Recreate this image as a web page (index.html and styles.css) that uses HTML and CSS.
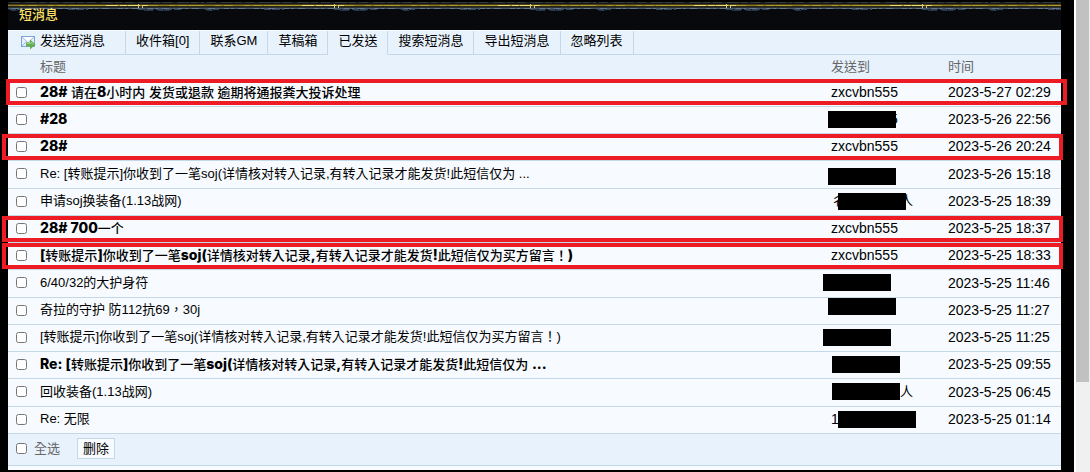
FILE: index.html
```
<!DOCTYPE html>
<html lang="zh-TW">
<head>
  <meta charset="UTF-8" />
  <meta name="viewport" content="width=device-width, initial-scale=1.0"/>
  <title>短消息</title>
  <link rel="stylesheet" href="styles.css">
</head>
<body>
  <main class="page">
    <div class="banner">
      <svg class="trim" width="100%" height="12" aria-hidden="true">
        <defs>
          <pattern id="trim" width="196" height="12" patternUnits="userSpaceOnUse">
            <rect width="196" height="12" fill="#08090c"/>
            <path d="M0 .5h196M0 1.500h196" stroke="#000"/>
            <path d="M0 2.500h196" stroke="#34393f"/>
            <path d="M0 2.500h196" stroke="#1d2024" stroke-dasharray="3 9 5 12 2 7"/>
            <path d="M0 3.500h196" stroke="#15161a"/>
            <path d="M0 4.500h196" stroke="#4a4216"/>
            <path d="M0 5.500h196" stroke="#b09a30"/>
            <path d="M0 5.500h60M150 5.500h30" stroke="#8a7a28" stroke-dasharray="11 6 3 9"/>
            <path d="M98 5.500h42" stroke="#e8dc80" stroke-dasharray="12 2 7 1"/>
            <path d="M0 6.500h196" stroke="#2c2810"/>
            <path d="M0 7.500h196" stroke="#2a3038"/>
            <path d="M0 8.500h196" stroke="#66788c"/>
            <path d="M0 8.500h196" stroke="#4a596b" stroke-dasharray="4 7 9 5 2 3"/>
            <path d="M130 9.500h44M1 9.500h14M60 9.500h20" stroke="#34465c" stroke-dasharray="7 1 8 2"/>
            <path d="M136 10.500h9M150 10.500h12M3 10.500h6" stroke="#26344a"/>
            <path d="M130.500 4v4M134.500 5v3" stroke="#d8cc80"/>
          </pattern>
        </defs>
        <rect width="100%" height="12" fill="url(#trim)"/>
      </svg>
      <h1>短消息</h1>
    </div>

    <form class="panel">
      <nav class="tabs">
        <a class="compose" href="#">
          <svg width="15" height="14" viewBox="0 0 15 14" aria-hidden="true">
            <rect x="0.500" y="0.500" width="13" height="10" fill="#e3eefa" stroke="#7ba4d8"/>
            <path d="M1 1h12L7 6.500z" fill="#fff"/>
            <path d="M1 1l6 5.500L13 1M1 10l4.500-4.500" fill="none" stroke="#9dbce3"/>
            <path d="M5 6.500h4v-3l5.500 5-5.500 5v-3h-4z" fill="#63ad4c"/>
            <path d="M6 7.500h4V6l2.500 2.500" fill="none" stroke="#97cf7e"/>
          </svg>
          发送短消息
        </a>
        <a href="#">收件箱[0]</a>
        <a href="#">联系GM</a>
        <a href="#">草稿箱</a>
        <a class="current" href="#">已发送</a>
        <a href="#">搜索短消息</a>
        <a href="#">导出短消息</a>
        <a href="#">忽略列表</a>
        <span class="fill"></span>
      </nav>

      <table class="messages">
        <thead>
          <tr>
            <th class="check"></th>
            <th>标题</th>
            <th class="user">发送到</th>
            <th class="time">时间</th>
          </tr>
        </thead>
        <tbody>
          <tr class="unread">
            <td class="check"><input type="checkbox" aria-label="选择"><span class="mark first"></span></td>
            <td><a href="#"><b>28#</b> 请在<b>8</b>小时内 发货或退款 逾期将通报粪大投诉处理</a></td>
            <td class="user">zxcvbn555</td>
            <td class="time">2023-5-27 02:29</td>
          </tr>
          <tr class="unread">
            <td class="check"><input type="checkbox" aria-label="选择"></td>
            <td><a href="#"><b>#28</b></a></td>
            <td class="user"><span class="tail near">5</span><span class="redact"></span></td>
            <td class="time">2023-5-26 22:56</td>
          </tr>
          <tr class="unread">
            <td class="check"><input type="checkbox" aria-label="选择"><span class="mark"></span></td>
            <td><a href="#"><b>28#</b></a></td>
            <td class="user">zxcvbn555</td>
            <td class="time">2023-5-26 20:24</td>
          </tr>
          <tr>
            <td class="check"><input type="checkbox" aria-label="选择"></td>
            <td><a href="#">Re: [转账提示]你收到了一笔soj(详情核对转入记录,有转入记录才能发货!此短信仅为 ...</a></td>
            <td class="user"><span class="redact low"></span></td>
            <td class="time">2023-5-26 15:18</td>
          </tr>
          <tr>
            <td class="check"><input type="checkbox" aria-label="选择"></td>
            <td><a href="#">申请soj换装备(1.13战网)</a></td>
            <td class="user cjk">彳<span class="tail">人</span><span class="redact right"></span></td>
            <td class="time">2023-5-25 18:39</td>
          </tr>
          <tr class="unread">
            <td class="check"><input type="checkbox" aria-label="选择"><span class="mark"></span></td>
            <td><a href="#"><b>28# 700</b>一个</a></td>
            <td class="user">zxcvbn555</td>
            <td class="time">2023-5-25 18:37</td>
          </tr>
          <tr class="unread">
            <td class="check"><input type="checkbox" aria-label="选择"><span class="mark"></span></td>
            <td><a href="#"><b>[</b>转账提示<b>]</b>你收到了一笔<b>soj(</b>详情核对转入记录<b>,</b>有转入记录才能发货<b>!</b>此短信仅为买方留言！<b>)</b></a></td>
            <td class="user">zxcvbn555</td>
            <td class="time">2023-5-25 18:33</td>
          </tr>
          <tr>
            <td class="check"><input type="checkbox" aria-label="选择"></td>
            <td><a href="#">6/40/32的大护身符</a></td>
            <td class="user"><span class="redact left"></span></td>
            <td class="time">2023-5-25 11:46</td>
          </tr>
          <tr>
            <td class="check"><input type="checkbox" aria-label="选择"></td>
            <td><a href="#">奇拉的守护 防112抗69，30j</a></td>
            <td class="user"><span class="redact high"></span></td>
            <td class="time">2023-5-25 11:27</td>
          </tr>
          <tr>
            <td class="check"><input type="checkbox" aria-label="选择"></td>
            <td><a href="#">[转账提示]你收到了一笔soj(详情核对转入记录,有转入记录才能发货!此短信仅为买方留言！)</a></td>
            <td class="user"><span class="redact left"></span></td>
            <td class="time">2023-5-25 11:25</td>
          </tr>
          <tr class="unread">
            <td class="check"><input type="checkbox" aria-label="选择"></td>
            <td><a href="#"><b>Re: [</b>转账提示<b>]</b>你收到了一笔<b>soj(</b>详情核对转入记录<b>,</b>有转入记录才能发货<b>!</b>此短信仅为 <b>...</b></a></td>
            <td class="user"><span class="redact middle"></span></td>
            <td class="time">2023-5-25 09:55</td>
          </tr>
          <tr>
            <td class="check"><input type="checkbox" aria-label="选择"></td>
            <td><a href="#">回收装备(1.13战网)</a></td>
            <td class="user cjk"><span class="tail alone">人</span><span class="redact middle"></span></td>
            <td class="time">2023-5-25 06:45</td>
          </tr>
          <tr>
            <td class="check"><input type="checkbox" aria-label="选择"></td>
            <td><a href="#">Re: 无限</a></td>
            <td class="user">1<span class="redact right wide"></span></td>
            <td class="time">2023-5-25 01:14</td>
          </tr>
        </tbody>
      </table>

      <div class="actions">
        <input type="checkbox" id="check-all">
        <label for="check-all">全选</label>
        <button type="button">删除</button>
      </div>
    </form>
  </main>

  <div class="scrollbar"><div class="thumb"></div></div>
</body>
</html>
```
FILE: styles.css
```
* {
  box-sizing: border-box;
}

body {
  margin: 0;
  display: flex;
  min-height: 100vh;
  background: #000;
  color: #000;
  font-family: "Liberation Sans", Arial, "Noto Sans CJK TC", sans-serif;
  font-size: 13px;
  line-height: 20px;
  overflow: hidden;
}

a {
  color: inherit;
  text-decoration: none;
}

.page {
  flex: 1;
  padding: 0 13px 0 8px;
}

.banner {
  background: #08090c;
  height: 30px;
}

.trim {
  display: block;
  margin-bottom: -7px;
}

h1 {
  position: relative;
  margin: 0;
  padding-left: 11px;
  color: #ffe26a;
  font-size: 13px;
  font-weight: 500;
}

.panel {
  background: #f7fbff;
  padding-bottom: 4px;
}

/* tabs */
.tabs {
  display: flex;
  background: #e8f2fd;
  border-top: 1px solid #f7fbff;
}

.tabs a,
.fill {
  height: 24px;
  border-bottom: 1px solid #c5d8e8;
}

.tabs a {
  padding: 0 10px;
  border-right: 1px solid #c5d8e8;
  white-space: nowrap;
}

.tabs .compose {
  display: flex;
  gap: 4px;
  padding: 0 20px 0 13px;
}

.compose svg {
  margin-top: 5px;
}

.tabs .current {
  border-bottom-color: #e8f2fd;
}

.fill {
  flex: 1;
}

/* message list */
.messages {
  width: 100%;
  border-collapse: separate;
  border-spacing: 0;
  table-layout: fixed;
}

.messages th {
  height: 25px;
  padding: 0 0 2px;
  background: #e8f2fd;
  color: #666;
  font-weight: normal;
  text-align: left;
}

.messages td {
  position: relative;
  height: 27px;
  padding: 0 0 2px;
  border-bottom: 1px solid #c5d8e8;
  white-space: nowrap;
}

.messages tbody tr {
  position: relative;
}

.messages tr:nth-child(4n) td {
  height: 28px;
}

.messages .check {
  position: static;
  width: 32px;
  padding-left: 8px;
}

.messages .user {
  width: 117px;
}

.messages .time {
  width: 113px;
}

td.user,
td.time {
  font-size: 14px;
}

td.cjk {
  font-size: 13px;
}

.unread a {
  font-weight: 500;
}

.unread b {
  font-family: Inter, Arial, sans-serif;
  font-size: 14px;
  font-weight: 800;
}

input[type="checkbox"] {
  display: block;
  width: 11px;
  height: 11px;
  margin: 0;
}

/* red frames over the rows in dispute */
.mark {
  position: absolute;
  z-index: 1;
  top: 0;
  left: -6px;
  right: -2px;
  height: 26px;
  border: 4px solid #ed1c24;
  pointer-events: none;
}

.mark.first {
  top: -1px;
  left: -2px;
  right: -6px;
}

/* hidden user names */
.redact {
  position: absolute;
  top: 4px;
  left: -3px;
  width: 68px;
  height: 17px;
  background: #000;
}

.redact.left { left: -8px; }
.redact.middle { left: 1px; }
.redact.right { left: 7px; }
.redact.high { top: 0; }
.redact.low { top: 7px; }
.redact.wide { width: 78px; }

.tail {
  margin-left: 56px;
}

.tail.near {
  margin-left: 59px;
}

.tail.alone {
  margin-left: 69px;
}

.actions {
  display: flex;
  align-items: center;
  gap: 7px;
  height: 32px;
  padding: 0 0 2px 8px;
  background: #e8f2fd;
  border-bottom: 1px solid #c5d8e8;
  color: #666;
}

.actions button {
  height: 21px;
  margin-left: 10px;
  padding: 0 5px;
  border: 1px solid #c5d8e8;
  background: #f7fbff;
  color: #000;
  font: inherit;
  line-height: 19px;
}

.scrollbar {
  width: 16px;
  background: #f0f0f0;
  border-left: 2px solid #fff;
}

.thumb {
  height: 81vh;
  margin-right: 1px;
  background: #c1c1c1;
}
```
